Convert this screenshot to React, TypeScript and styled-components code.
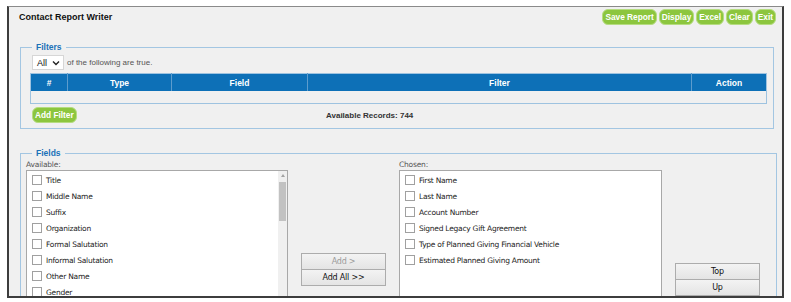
import React from "react";
import styled, { createGlobalStyle } from "styled-components";

const GlobalStyle = createGlobalStyle`
  html, body {
    margin: 0;
    padding: 0;
    background: #fff;
    font-family: "Liberation Sans", Arial, sans-serif;
  }
`;

const Page = styled.div`
  width: 791px;
  height: 302px;
  overflow: hidden;
  padding: 6px 7px 0 7px;
  box-sizing: border-box;
`;

const Panel = styled.div`
  height: 292px;
  box-sizing: border-box;
  background: #f0f0f0;
  border: 2px solid #3d3d3d;
  border-top: 1px solid #8a8a8a;
  overflow: hidden;
  padding: 0 6px 0 10px;
`;

const Header = styled.div`
  display: flex;
  align-items: center;
  justify-content: space-between;
  height: 20px;
`;

const Title = styled.h1`
  margin: 0;
  font-size: 9px;
  font-weight: bold;
  color: #111;
`;

const Actions = styled.div`
  display: flex;
  gap: 2px;
`;

const GreenButton = styled.button`
  background: #8cc63e;
  color: #fff;
  border: 1px solid #b5dc80;
  border-radius: 6px;
  font-family: "Liberation Sans", Arial, sans-serif;
  font-weight: bold;
  font-size: 8.3px;
  height: 16px;
  padding: 0 2px;
  line-height: 14px;
`;

const Spacer = styled.div<{ $h: number }>`
  height: ${(p) => p.$h}px;
`;

const Fieldset = styled.fieldset<{ $right: number; $top?: number }>`
  margin: 0 ${(p) => p.$right}px 0 1px;
  border: 1px solid #a3c6e2;
  padding: ${(p) => p.$top ?? 0}px 6px 5px 9px;
  min-width: 0;
`;

const Legend = styled.legend`
  color: #1b72b8;
  font-weight: bold;
  font-size: 8.5px;
  padding: 0 4px;
  margin-left: 2px;
`;

const MatchRow = styled.div`
  display: flex;
  align-items: center;
  gap: 3px;
  margin: 3px 0 3px 2px;
`;

const SelectBox = styled.div`
  display: flex;
  align-items: center;
  justify-content: space-between;
  width: 32px;
  height: 15px;
  box-sizing: border-box;
  background: #fff;
  border: 1px solid #d6d6d6;
  padding: 0 3px 0 4px;
  font-size: 9px;
  color: #111;
`;

const Hint = styled.span`
  font-size: 8px;
  color: #555;
`;

const FilterTable = styled.table`
  width: 100%;
  table-layout: fixed;
  border-collapse: collapse;
  border: 1px solid #9ec3e0;
  td, th { padding: 0; }
`;

const HeadCell = styled.th<{ $w?: number }>`
  background: #0d70b7;
  color: #fff;
  font-size: 8.5px;
  font-weight: bold;
  height: 17px;
  width: ${(p) => (p.$w ? `${p.$w}px` : "auto")};
  border-left: 1px solid #5d9ccd;
  &:first-child { border-left: none; }
`;

const EmptyRow = styled.td`
  height: 12px;
  background: #f0f0f0;
`;

const FilterFoot = styled.div`
  display: grid;
  grid-template-columns: 294px auto;
  align-items: center;
  margin: 3px 0 0 2px;
`;

const FootLeft = styled.div`
  display: flex;
`;

const Records = styled.span`
  font-size: 8px;
  font-weight: bold;
  color: #333;
`;

const FieldsGrid = styled.div`
  display: grid;
  grid-template-columns: 262px 85px 263px 85px;
  column-gap: 13px;
  margin-left: -4px;
`;

const Column = styled.div`
  display: flex;
  flex-direction: column;
`;

const Label = styled.div`
  font-size: 7.5px;
  color: #555;
  height: 10px;
  line-height: 10px;
  font-family: "DejaVu Sans", sans-serif;
  letter-spacing: -0.2px;
`;

const ListBox = styled.div`
  display: flex;
  height: 140px;
  background: #fff;
  border: 1px solid #a8a8a8;
  box-sizing: border-box;
`;

const Items = styled.ul`
  flex: 1;
  list-style: none;
  margin: 0;
  padding: 1px 0 0 5px;
`;

const Item = styled.li`
  display: flex;
  align-items: center;
  gap: 4px;
  height: 16px;
  font-size: 7.5px;
  color: #222;
  font-family: "DejaVu Sans", sans-serif;
  letter-spacing: -0.25px;
`;

const Check = styled.span`
  width: 8px;
  height: 8px;
  border: 1px solid #a0a0a0;
  background: #fff;
  flex-shrink: 0;
`;

const Scrollbar = styled.div`
  width: 9px;
  background: #f0f0f0;
  display: flex;
  flex-direction: column;
  align-items: center;
  padding-top: 1px;
`;

const Arrow = styled.div`
  width: 0;
  height: 0;
  border-left: 2px solid transparent;
  border-right: 2px solid transparent;
  border-bottom: 3px solid #a3a3a3;
  margin: 2px 0 5px;
`;

const Thumb = styled.div`
  width: 7px;
  height: 39px;
  background: #c2c2c2;
`;

const SideButtons = styled.div<{ $top: number }>`
  display: flex;
  flex-direction: column;
  padding-top: ${(p) => p.$top}px;
`;

const GrayButton = styled.button<{ $disabled?: boolean }>`
  height: 17px;
  width: 85px;
  box-sizing: border-box;
  border: 1px solid #acacac;
  background: linear-gradient(#f3f3f3, #e4e4e4);
  color: ${(p) => (p.$disabled ? "#9a9a9a" : "#111")};
  font-size: 8px;
  font-family: "DejaVu Sans", sans-serif;
  letter-spacing: -0.2px;
  padding: 0;
  & + & { margin-top: -1px; }
`;

const available = [
  "Title",
  "Middle Name",
  "Suffix",
  "Organization",
  "Formal Salutation",
  "Informal Salutation",
  "Other Name",
  "Gender",
];

const chosen = [
  "First Name",
  "Last Name",
  "Account Number",
  "Signed Legacy Gift Agreement",
  "Type of Planned Giving Financial Vehicle",
  "Estimated Planned Giving Amount",
];

const Chevron = () => (
  <svg width="8" height="6" viewBox="0 0 8 6">
    <path d="M1 1.5 L4 4.5 L7 1.5" fill="none" stroke="#222" strokeWidth="1.4" />
  </svg>
);

const App = () => {
  return (
    <Page>
      <GlobalStyle />
      <Panel>
        <Header>
          <Title>Contact Report Writer</Title>
          <Actions>
            {["Save Report", "Display", "Excel", "Clear", "Exit"].map((b) => (
              <GreenButton key={b}>{b}</GreenButton>
            ))}
          </Actions>
        </Header>

        <Spacer $h={15} />

        <Fieldset $right={2}>
          <Legend>Filters</Legend>
          <MatchRow>
            <SelectBox>
              All <Chevron />
            </SelectBox>
            <Hint>of the following are true.</Hint>
          </MatchRow>
          <FilterTable>
            <thead>
              <tr>
                <HeadCell $w={36}>#</HeadCell>
                <HeadCell $w={103}>Type</HeadCell>
                <HeadCell $w={135}>Field</HeadCell>
                <HeadCell>Filter</HeadCell>
                <HeadCell $w={74}>Action</HeadCell>
              </tr>
            </thead>
            <tbody>
              <tr>
                <EmptyRow colSpan={5} />
              </tr>
            </tbody>
          </FilterTable>
          <FilterFoot>
            <FootLeft>
              <GreenButton>Add Filter</GreenButton>
            </FootLeft>
            <Records>Available Records: 744</Records>
          </FilterFoot>
        </Fieldset>

        <Spacer $h={19} />

        <Fieldset $right={-1} $top={2}>
          <Legend>Fields</Legend>
          <FieldsGrid>
            <Column>
              <Label>Available:</Label>
              <ListBox>
                <Items>
                  {available.map((f) => (
                    <Item key={f}>
                      <Check />
                      {f}
                    </Item>
                  ))}
                </Items>
                <Scrollbar>
                  <Arrow />
                  <Thumb />
                </Scrollbar>
              </ListBox>
            </Column>
            <SideButtons $top={93}>
              <GrayButton $disabled>Add &gt;</GrayButton>
              <GrayButton>Add All &gt;&gt;</GrayButton>
            </SideButtons>
            <Column>
              <Label>Chosen:</Label>
              <ListBox>
                <Items>
                  {chosen.map((f) => (
                    <Item key={f}>
                      <Check />
                      {f}
                    </Item>
                  ))}
                </Items>
              </ListBox>
            </Column>
            <SideButtons $top={103}>
              <GrayButton>Top</GrayButton>
              <GrayButton>Up</GrayButton>
            </SideButtons>
          </FieldsGrid>
        </Fieldset>
      </Panel>
    </Page>
  );
};

export default App;
